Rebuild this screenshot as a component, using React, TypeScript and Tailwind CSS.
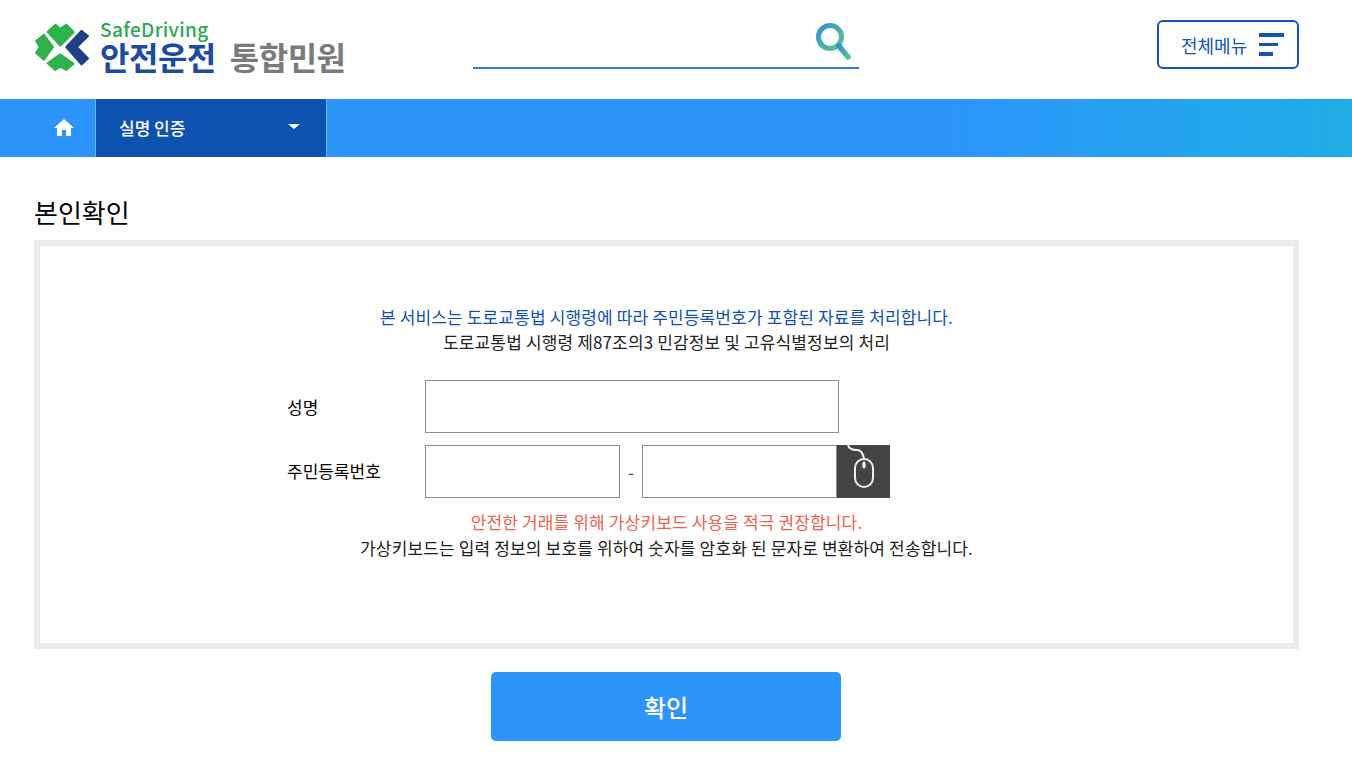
import { MdHome } from "react-icons/md"

function LogoMark() {
  return (
    <svg width="56" height="50" viewBox="45 50 170 150" className="shrink-0">
      <g fill="#2fb24c" stroke="#2fb24c" strokeWidth="7" strokeLinejoin="round">
        <path d="M84 79 L107 58 L122 70 L140 58 L162 80 L122 120 Z" />
        <path d="M84 174 L122 148 L161 176 L140 194 L122 184 L106 194 Z" />
        <path d="M72 88 L99 125 L72 163 L49 143 L60 125 L49 107 Z" />
      </g>
      <path
        d="M186 76 L206 92 L172 125 L206 160 L186 178 L140 125 Z"
        fill="#213f85"
        stroke="#213f85"
        strokeWidth="6"
        strokeLinejoin="round"
      />
    </svg>
  )
}

function Header() {
  return (
    <header className="flex h-[99px] items-start pr-[53px] pl-[34px]">
      <div className="mt-[17px] flex w-[439px] shrink-0 items-start">
        <div className="mt-[5px] ml-[1px]">
          <LogoMark />
        </div>
        <div className="ml-[9px] flex flex-col">
          <span className="text-[19px] leading-[24px] font-medium tracking-[0.35px] text-[#2aa84f]">SafeDriving</span>
          <span className="-mt-[3px] flex items-end">
            <span className="text-[32px] leading-[36px] font-bold tracking-[-0.5px] text-[#1a4da0]">안전운전</span>
            <span className="ml-[14px] text-[32px] leading-[36px] font-bold tracking-[-0.5px] text-[#7b7b7b]">통합민원</span>
          </span>
        </div>
      </div>
      <div className="relative mt-[20px] h-[49px] w-[386px] border-b-2 border-[#2d7fd0]">
        <svg width="40" height="40" viewBox="0 0 40 40" className="absolute top-[1px] right-[4px]">
          <defs>
            <linearGradient id="searchGrad" x1="0" y1="0" x2="1" y2="1">
              <stop offset="0" stopColor="#3a8ed6" />
              <stop offset="1" stopColor="#55c98d" />
            </linearGradient>
          </defs>
          <circle cx="15" cy="16" r="11.5" fill="none" stroke="url(#searchGrad)" strokeWidth="5" />
          <path d="M24 25 L33 36" stroke="url(#searchGrad)" strokeWidth="5.5" strokeLinecap="round" />
        </svg>
      </div>
      <button className="mt-[20px] ml-auto flex h-[49px] w-[142px] items-center rounded-[6px] border-2 border-[#0e55b5] pl-[22px] text-[#0e55b5]">
        <span className="text-[18px] leading-none">전체메뉴</span>
        <span className="ml-[12px] flex flex-col gap-[6px]">
          <span className="h-[4px] w-[25px] bg-[#0e55b5]" />
          <span className="h-[3px] w-[19px] bg-[#0e55b5]" />
          <span className="h-[4px] w-[14px] bg-[#0e55b5]" />
        </span>
      </button>
    </header>
  )
}

function NavBar() {
  return (
    <nav className="flex h-[58px] bg-linear-to-r from-[#2b95fb] from-70% to-[#21ade5]">
      <div className="flex w-[95px] items-center justify-center pl-[32px] text-white">
        <MdHome size={24} />
      </div>
      <div className="flex w-[232px] items-center justify-between border-x border-[#6cb4f5] bg-[#0d52b0] pr-[26px] pl-[23px] text-white">
        <span className="text-[17px] font-medium">실명 인증</span>
        <span className="mb-[4px] h-0 w-0 border-x-[6px] border-t-[5px] border-x-transparent border-t-white" />
      </div>
    </nav>
  )
}

const inputClass = "h-[53px] border border-[#8c8c8c] bg-white"

function VerifyBox() {
  return (
    <div className="mt-[10px] h-[409px] border-[6px] border-[#ebebeb] pt-[58px]">
      <p className="text-center text-[17px] leading-[25px] tracking-[0.14px] text-[#0d52b0]">
        본 서비스는 도로교통법 시행령에 따라 주민등록번호가 포함된 자료를 처리합니다.
      </p>
      <p className="text-center text-[17px] leading-[25px] tracking-[0.14px] text-[#222]">
        도로교통법 시행령 제87조의3 민감정보 및 고유식별정보의 처리
      </p>
      <div className="mt-[26px] flex flex-col gap-[12px] pl-[247px]">
        <div className="flex items-center">
          <label className="w-[138px] text-[17px] text-black">성명</label>
          <div className={`${inputClass} w-[414px]`} />
        </div>
        <div className="flex items-center">
          <label className="w-[138px] pb-[2px] text-[17px] text-black">주민등록번호</label>
          <div className={`${inputClass} w-[195px]`} />
          <span className="w-[22px] text-center text-[17px] text-[#444]">-</span>
          <div className={`${inputClass} w-[195px]`} />
          <div className="h-[53px] w-[53px] bg-[#444444]">
            <svg width="53" height="53" viewBox="0 0 53 53" fill="none" stroke="#f0f0f0" strokeWidth="2">
              <path d="M11 0 C12 4 15 5 20 5 C24 5 26 8 27 14" />
              <rect x="18" y="14" width="18" height="28" rx="9" />
              <ellipse cx="27" cy="20" rx="1.7" ry="3.5" fill="#f0f0f0" stroke="none" />
            </svg>
          </div>
        </div>
      </div>
      <p className="mt-[11px] text-center text-[17px] leading-[26px] tracking-[0.14px] text-[#f0614f]">
        안전한 거래를 위해 가상키보드 사용을 적극 권장합니다.
      </p>
      <p className="text-center text-[17px] leading-[26px] tracking-[0.15px] text-[#222]">
        가상키보드는 입력 정보의 보호를 위하여 숫자를 암호화 된 문자로 변환하여 전송합니다.
      </p>
    </div>
  )
}

export default function App() {
  return (
    <div className="h-[784px] overflow-hidden bg-white font-['Noto_Sans_CJK_KR','Noto_Sans',sans-serif]">
      <Header />
      <NavBar />
      <main className="pr-[53px] pl-[34px]">
        <h2 className="mt-[36px] text-[26px] leading-[37px] font-normal text-black">본인확인</h2>
        <VerifyBox />
        <div className="mt-[23px] pl-[457px]">
          <button className="h-[69px] w-[350px] rounded-[5px] bg-[#2b95fb] text-[24px] font-medium text-white">확인</button>
        </div>
      </main>
    </div>
  )
}
